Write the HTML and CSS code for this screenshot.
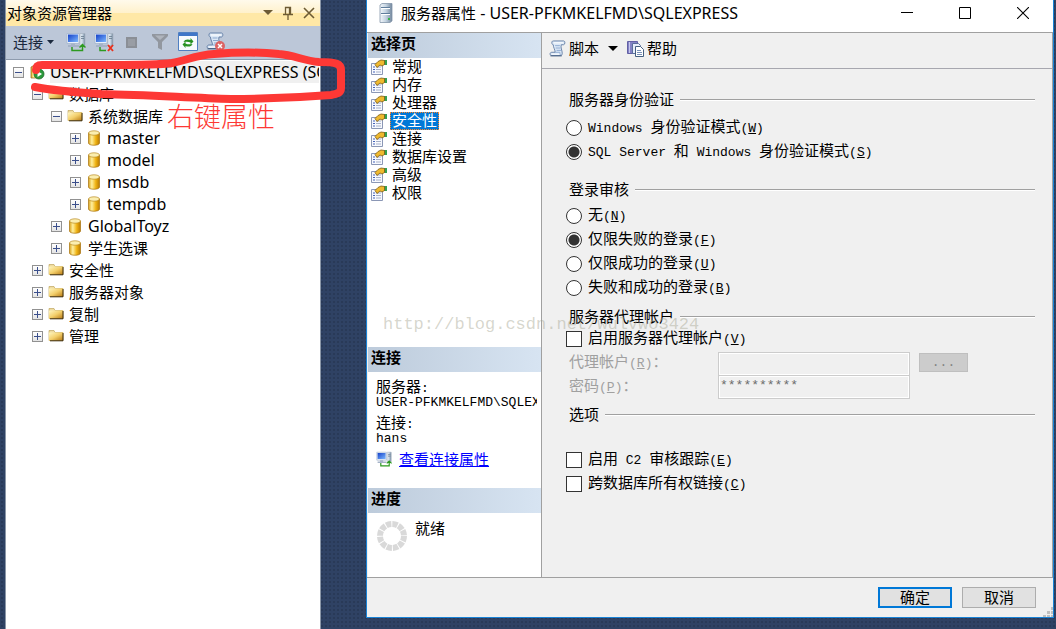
FILE: index.html
```
<!DOCTYPE html>
<html lang="zh-CN">

<head>
    <meta charset="UTF-8">
    <meta name="viewport" content="width=device-width, initial-scale=1.0">
    <title>服务器属性</title>
    <link rel="stylesheet" href="styles.css">
</head>

<body>
    <!-- shared icons -->
    <svg class="sprite" aria-hidden="true">
        <defs>
            <linearGradient id="gold" x1="0" x2="1">
                <stop offset="0" stop-color="#d9a21c"/>
                <stop offset=".3" stop-color="#fff0a0"/>
                <stop offset=".65" stop-color="#f0b416"/>
                <stop offset="1" stop-color="#b97a00"/>
            </linearGradient>
            <linearGradient id="folderFill" x1="0" y1="0" x2="1" y2="1">
                <stop offset="0" stop-color="#fff6c0"/>
                <stop offset=".5" stop-color="#f3cf6b"/>
                <stop offset="1" stop-color="#b87a14"/>
            </linearGradient>
            <linearGradient id="screen" x1="0" y1="0" x2="1" y2="1">
                <stop offset="0" stop-color="#1440c8"/>
                <stop offset="1" stop-color="#7db8ff"/>
            </linearGradient>
            <linearGradient id="steel" x1="0" x2="1">
                <stop offset="0" stop-color="#f4f8fb"/>
                <stop offset=".5" stop-color="#c3d2e0"/>
                <stop offset="1" stop-color="#71869c"/>
            </linearGradient>
        </defs>
        <symbol id="folder" viewBox="0 0 16 16">
            <path d="M1 2.500h5l1 2h8v8H1z" fill="#efdca0" stroke="#b79a4d" stroke-width=".6"/>
            <path d="M1 4.500h14v8H1z" fill="url(#folderFill)"/>
            <path d="M2 12.800h13V5" fill="none" stroke="#3b2a0a"/>
        </symbol>
        <symbol id="database" viewBox="0 0 16 16">
            <path d="M2.500 3v10c0 3 11 3 11 0V3z" fill="url(#gold)" stroke="#a87310" stroke-width=".7"/>
            <ellipse cx="8" cy="3" rx="5.500" ry="2.200" fill="#fbeeb0" stroke="#b98b22" stroke-width=".7"/>
        </symbol>
        <symbol id="server" viewBox="0 0 16 16">
            <path d="M2 3l4-2 4 2v11H2z" fill="url(#gold)" stroke="#8c6a1c" stroke-width=".7"/>
            <circle cx="10" cy="10" r="5" fill="#2c9a3c" stroke="#1a6a28" stroke-width=".8"/>
            <path d="M8.500 7l4.500 3-4.500 3z" fill="#fff"/>
        </symbol>
        <symbol id="computers" viewBox="0 0 20 20">
            <path d="M14 1.500h5v12h-5z" fill="url(#steel)" stroke="#a5b0be" stroke-width=".7"/>
            <path d="M15 4.500h3M15 6.500h3" stroke="#66788c" stroke-width=".8"/>
            <path d="M1 1.500h12v10H1z" fill="#e8f0fa" stroke="#a5b5cd" stroke-width=".8"/>
            <path d="M2 2.500h10v7.500H2z" fill="url(#screen)"/>
            <path d="M5 11.500h4V13H5zM2 13h11v2H2z" fill="#a5b3c8"/>
        </symbol>
        <symbol id="connect" viewBox="0 0 20 20">
            <use href="#computers"/>
            <path d="M6 15v3.500h10.500V13M13.500 15.500l3-3 3 3" fill="none" stroke="#2d9a1f" stroke-width="1.500"/>
        </symbol>
        <symbol id="disconnect" viewBox="0 0 20 20">
            <use href="#computers"/>
            <path d="M6 15v3.500h6" fill="none" stroke="#2d9a1f" stroke-width="1.500"/>
            <path d="M14 13l5 6M19 13l-5 6" stroke="#e8311c" stroke-width="1.900"/>
        </symbol>
        <symbol id="scroll" viewBox="0 0 18 18">
            <path d="M3 3C3 1 4 1 5 1h10.500C17.500 1 17 5 15.500 5H13c-1 3 1 6 1 9 0 1.500-.5 2.500-2 2.500H3c-2.500 0-2.500-3.500 0-3.500h3.500c0-3-2-5-2-8C3.500 5 3 4 3 3z" fill="#dce8f6" stroke="#6681a8"/>
            <path d="M6.500 13h5c0 2 .3 3 1.500 3M6.500 6h5M7 8.500h5M8 11h5" fill="none" stroke="#8ba8cf"/>
            <path d="M5 3h10M3 15h8" stroke="#fff"/>
            <path d="M1.500 16.800h12" stroke="#40597c"/>
        </symbol>
        <symbol id="page" viewBox="0 0 16 16">
            <path d="M.5 4.500h11v11H.5z" fill="#f7f9fe" stroke="#8b97b5"/>
            <path d="M2 8h2M2 10.500h2M2 13h2" stroke="#4463b8" stroke-width="1.200"/>
            <path d="M5 8h5M5 10.500h5M5 13h5" stroke="#a6b0c8"/>
            <path d="M13 1h3v5h-3z" fill="#35a052"/>
            <path d="M4 5.500L7 2.500l3-1.500 3.500.5v4L11 7 9 6 6 8.500z" fill="#efb92e" stroke="#7c5a14" stroke-width=".8"/>
        </symbol>
    </svg>

    <div class="desktop">
        <aside class="explorer">
            <header class="explorer-title">
                <h1>对象资源管理器</h1>
                <button aria-label="窗口位置"><svg width="10" height="6"><path d="M0 0h10L5 5z" fill="#6d5b35"/></svg></button>
                <button aria-label="自动隐藏"><svg width="12" height="14"><path d="M3.500 8V1.500h5V8M1 8.500h10M6 9v5M7.500 1v7" fill="none" stroke="#6d5b35" stroke-width="1.300"/></svg></button>
                <button aria-label="关闭"><svg width="12" height="12"><path d="M1 1l10 10M11 1L1 11" stroke="#6d5b35" stroke-width="1.600"/></svg></button>
            </header>
            <div class="explorer-tools">
                <button class="connect-menu">连接<svg width="7" height="4"><path d="M0 0h7L3.500 4z" fill="#1b293e"/></svg></button>
                <button aria-label="连接服务器"><svg width="20" height="20"><use href="#connect"/></svg></button>
                <button aria-label="断开连接"><svg width="20" height="20"><use href="#disconnect"/></svg></button>
                <button aria-label="停止"><svg width="20" height="20"><path d="M4 5h11v11H4z" fill="#8b8f96"/><path d="M6 7h7v7H6z" fill="#999da4"/></svg></button>
                <button aria-label="筛选"><svg width="20" height="20"><path d="M2 2h16v2l-6 6v8l-4-2v-6L2 4z" fill="#92979f"/><path d="M5 3.500h10L10 8z" fill="#b0b5bd"/></svg></button>
                <button aria-label="刷新"><svg width="20" height="20"><path d="M.5.5h19v18H.5z" fill="#f7fafd" stroke="#4f7fc2"/><path d="M1 1h18v3H1z" fill="#3f76c8"/><path d="M5.500 10c1-3 5-3 7-2V6l3 3.500-3 3v-2c-2-1-4-1-7-.5zM14.500 12c-1 3-5 3-7 2v2l-3-3.500 3-3v2c2 1 4 1 7 .5z" fill="#279122"/></svg></button>
                <button aria-label="停止脚本"><svg width="20" height="20"><use href="#scroll" width="18" height="18"/><circle cx="14" cy="14" r="5" fill="#dc6464"/><path d="M12 12l4 4M16 12l-4 4" stroke="#fff" stroke-width="1.500"/></svg></button>
            </div>
            <ul class="tree">
                <li class="level-0 current"><button class="toggle open" aria-label="折叠"></button><svg width="16" height="16"><use href="#server"/></svg><span class="latin">USER-PFKMKELFMD\SQLEXPRESS (SQL Server)</span></li>
                <li class="level-1"><button class="toggle open" aria-label="折叠"></button><svg width="16" height="16"><use href="#folder"/></svg><span>数据库</span></li>
                <li class="level-2"><button class="toggle open" aria-label="折叠"></button><svg width="16" height="16"><use href="#folder"/></svg><span>系统数据库</span></li>
                <li class="level-3"><button class="toggle" aria-label="展开"></button><svg width="16" height="16"><use href="#database"/></svg><span class="latin">master</span></li>
                <li class="level-3"><button class="toggle" aria-label="展开"></button><svg width="16" height="16"><use href="#database"/></svg><span class="latin">model</span></li>
                <li class="level-3"><button class="toggle" aria-label="展开"></button><svg width="16" height="16"><use href="#database"/></svg><span class="latin">msdb</span></li>
                <li class="level-3"><button class="toggle" aria-label="展开"></button><svg width="16" height="16"><use href="#database"/></svg><span class="latin">tempdb</span></li>
                <li class="level-2"><button class="toggle" aria-label="展开"></button><svg width="16" height="16"><use href="#database"/></svg><span class="latin">GlobalToyz</span></li>
                <li class="level-2"><button class="toggle" aria-label="展开"></button><svg width="16" height="16"><use href="#database"/></svg><span>学生选课</span></li>
                <li class="level-1"><button class="toggle" aria-label="展开"></button><svg width="16" height="16"><use href="#folder"/></svg><span>安全性</span></li>
                <li class="level-1"><button class="toggle" aria-label="展开"></button><svg width="16" height="16"><use href="#folder"/></svg><span>服务器对象</span></li>
                <li class="level-1"><button class="toggle" aria-label="展开"></button><svg width="16" height="16"><use href="#folder"/></svg><span>复制</span></li>
                <li class="level-1"><button class="toggle" aria-label="展开"></button><svg width="16" height="16"><use href="#folder"/></svg><span>管理</span></li>
            </ul>
        </aside>

        <main class="dialog">
            <header class="dialog-title">
                <svg width="14" height="20"><path d="M1 2l2-1.500h10V18l-2 1.500H1z" fill="url(#steel)" stroke="#8496a9" stroke-width=".8"/><path d="M2 4.500h9M2 10.500h9" stroke="#5f7d9c"/><path d="M2 5.500h9M2 11.500h9" stroke="#fff"/><path d="M9 15h2v2H9z" fill="#39b54a"/></svg>
                <h2>服务器属性<span class="latin"> - USER-PFKMKELFMD\SQLEXPRESS</span></h2>
                <div class="window-buttons">
                    <button aria-label="最小化"><svg width="12" height="12"><path d="M0 5.500h12" stroke="#000"/></svg></button>
                    <button aria-label="最大化"><svg width="12" height="12"><path d="M.5.5h11v11H.5z" fill="none" stroke="#000"/></svg></button>
                    <button aria-label="关闭"><svg width="12" height="12"><path d="M0 0l12 12M12 0L0 12" stroke="#000" stroke-width="1.100"/></svg></button>
                </div>
            </header>

            <div class="dialog-body">
                <nav class="side">
                    <h3>选择页</h3>
                    <ul class="pages">
                        <li><svg width="16" height="16"><use href="#page"/></svg><button>常规</button></li>
                        <li><svg width="16" height="16"><use href="#page"/></svg><button>内存</button></li>
                        <li><svg width="16" height="16"><use href="#page"/></svg><button>处理器</button></li>
                        <li><svg width="16" height="16"><use href="#page"/></svg><button class="selected">安全性</button></li>
                        <li><svg width="16" height="16"><use href="#page"/></svg><button>连接</button></li>
                        <li><svg width="16" height="16"><use href="#page"/></svg><button>数据库设置</button></li>
                        <li><svg width="16" height="16"><use href="#page"/></svg><button>高级</button></li>
                        <li><svg width="16" height="16"><use href="#page"/></svg><button>权限</button></li>
                    </ul>
                    <h3>连接</h3>
                    <div class="connection">
                        <p>服务器<span class="en">:</span></p>
                        <p class="en">USER-PFKMKELFMD\SQLEXPRESS</p>
                        <p class="next">连接<span class="en">:</span></p>
                        <p class="en">hans</p>
                        <div class="view-link"><svg width="16" height="16"><use href="#connect"/></svg><a href="#">查看连接属性</a></div>
                    </div>
                    <h3>进度</h3>
                    <div class="progress">
                        <svg width="32" height="32"><circle cx="16" cy="16" r="12" fill="none" stroke="#d9d9d9" stroke-width="6" stroke-dasharray="5.280 1"/></svg>
                        <span>就绪</span>
                    </div>
                </nav>

                <section class="content">
                    <div class="content-tools">
                        <button><svg width="17" height="17"><use href="#scroll"/></svg>脚本</button>
                        <button class="script-menu" aria-label="脚本选项"><svg width="10" height="5"><path d="M0 0h10L5 5z"/></svg></button>
                        <button><svg width="17" height="17"><path d="M.5 1.500h10v12H.5z" fill="#8382c4" stroke="#6260a5"/><path d="M2.500 2v11" stroke="#c6c6ee"/><path d="M5.500 3.500h6l2 2v8h-8z" fill="#e8eefb" stroke="#5b6f9c"/><path d="M8.500 6.500h5l3 3v7h-8z" fill="#fff" stroke="#445f80"/><path d="M10 10.500h4M10 12.500h5M10 14.500h5" stroke="#7891b8"/></svg>帮助</button>
                    </div>

                    <form class="settings">
                        <h4>服务器身份验证</h4>
                        <div class="options auth">
                            <label><input type="radio" name="auth"><span><span class="en">Windows </span>身份验证模式<span class="en">(<u>W</u>)</span></span></label>
                            <label><input type="radio" name="auth" checked><span><span class="en">SQL Server </span>和<span class="en"> Windows </span>身份验证模式<span class="en">(<u>S</u>)</span></span></label>
                        </div>

                        <h4>登录审核</h4>
                        <div class="options audit">
                            <label><input type="radio" name="audit"><span>无<span class="en">(<u>N</u>)</span></span></label>
                            <label><input type="radio" name="audit" checked><span>仅限失败的登录<span class="en">(<u>F</u>)</span></span></label>
                            <label><input type="radio" name="audit"><span>仅限成功的登录<span class="en">(<u>U</u>)</span></span></label>
                            <label><input type="radio" name="audit"><span>失败和成功的登录<span class="en">(<u>B</u>)</span></span></label>
                        </div>

                        <h4>服务器代理帐户</h4>
                        <div class="options proxy">
                            <label><input type="checkbox"><span>启用服务器代理帐户<span class="en">(<u>V</u>)</span></span></label>
                            <div class="fields">
                                <label for="account">代理帐户<span class="en">(<u>R</u>)</span>：</label>
                                <input type="text" id="account" disabled>
                                <button type="button" disabled>...</button>
                                <label for="password">密码<span class="en">(<u>P</u>)</span>：</label>
                                <input type="text" id="password" value="**********" disabled>
                            </div>
                        </div>

                        <h4>选项</h4>
                        <div class="options other">
                            <label><input type="checkbox"><span>启用<span class="en"> C2 </span>审核跟踪<span class="en">(<u>E</u>)</span></span></label>
                            <label><input type="checkbox"><span>跨数据库所有权链接<span class="en">(<u>C</u>)</span></span></label>
                        </div>
                    </form>
                </section>
            </div>

            <footer class="dialog-footer">
                <button class="primary">确定</button>
                <button>取消</button>
                <svg class="grip" width="10" height="10"><path d="M8 0h3v3H8zM4 4h3v3H4zM8 4h3v3H8zM0 8h3v3H0zM4 8h3v3H4zM8 8h3v3H8z" fill="#bfbfbf"/></svg>
            </footer>
            <span class="watermark">http://blog.csdn.net/wulvwo3424</span>
        </main>
    </div>

    <!-- red pen marks -->
    <svg class="scribble" width="350" height="105" aria-hidden="true">
        <path d="M36 70c0-4 2-5 6-5h70c25 0 45 0 60-2 15-3 25-8 42-9 25-2 45-2 65 0 15 1 25 7 40 8 18 0 22 2 22 8v18c0 5-4 6-10 7-25 2-60 4-100 4-40-1-80-4-130-5-30-2-45-3-66-7" fill="none" stroke="#fd3835" stroke-width="8" stroke-linecap="round" stroke-linejoin="round"/>
    </svg>
    <span class="note">右键属性</span>
</body>

</html>
```
FILE: styles.css
```
* {
    box-sizing: border-box;
}

body {
    margin: 0;
    font-family: "Noto Sans", "Noto Sans CJK SC", sans-serif;
    font-size: 15px;
    line-height: 18px;
    color: #000;
    background-color: #2f4264;
    background-image: radial-gradient(#293a58 1px, transparent 1px);
    background-size: 4px 4px;
}

h1,
h2,
h3,
h4,
p,
ul {
    margin: 0;
    padding: 0;
    font-size: 15px;
    font-weight: normal;
    list-style: none;
}

button,
input {
    font: inherit;
    color: inherit;
}

button {
    display: flex;
    align-items: center;
    padding: 0;
    border: none;
    background: none;
}

svg {
    display: block;
    flex: none;
}

.sprite {
    position: absolute;
    width: 0;
    height: 0;
}

.latin {
    font-size: 16px;
}

.en {
    font-family: "Liberation Mono", monospace;
    font-size: 13px;
    white-space: pre;
}

.desktop {
    display: flex;
    gap: 45px;
    min-height: 100vh;
    padding: 0 2px 0 5px;
}

/* object explorer */
.explorer {
    flex: 0 0 316px;
    min-width: 0;
    background: #fff;
    border: 1px solid #8b97a8;
    border-width: 0 1px;
}

.explorer-title {
    display: flex;
    align-items: center;
    gap: 9px;
    height: 26px;
    padding: 0 5px 0 1px;
    background: linear-gradient(#fffaec, #fff1cb 50%, #ffe8a6 50%, #ffe8a6);
}

.explorer-title h1 {
    flex: 1;
}

.explorer-tools {
    display: flex;
    align-items: center;
    gap: 8px;
    height: 34px;
    padding: 0 7px 2px;
    background: #bcc7d8;
    border-bottom: 1px solid #8e9bad;
}

.connect-menu {
    gap: 4px;
    margin-right: 4px;
    color: #1b293e;
}

.tree {
    padding-top: 1px;
}

.tree li {
    display: flex;
    align-items: center;
    height: 22px;
    padding-right: 1px;
    overflow: hidden;
    white-space: nowrap;
}

.tree li svg {
    margin: 0 5px;
}

.tree .level-0 {
    padding-left: 7px;
}

.tree .level-1 {
    padding-left: 26px;
}

.tree .level-2 {
    padding-left: 45px;
}

.tree .level-3 {
    padding-left: 64px;
}

.current span {
    min-width: 0;
    overflow: hidden;
    line-height: 22px;
    background: #f0f0f0;
}

.toggle {
    flex: none;
    width: 11px;
    height: 11px;
    border: 1px solid #919191;
    background:
        linear-gradient(#3b4f8c, #3b4f8c) center / 7px 1px no-repeat,
        linear-gradient(#3b4f8c, #3b4f8c) center / 1px 7px no-repeat,
        linear-gradient(#fff, #e4e4e4);
}

.toggle.open {
    background:
        linear-gradient(#3b4f8c, #3b4f8c) center / 7px 1px no-repeat,
        linear-gradient(#fff, #e4e4e4);
}

/* properties dialog */
.dialog {
    position: relative;
    flex: 1;
    min-width: 0;
    display: flex;
    flex-direction: column;
    margin-bottom: 11px;
    background: #f0f0f0;
    border: 1px solid #1883d7;
    border-top: none;
    font-family: "Liberation Sans", "Noto Sans CJK SC", sans-serif;
}

.dialog-title {
    display: flex;
    align-items: center;
    gap: 8px;
    height: 33px;
    padding: 0 24px 6px 12px;
    background: #fff;
    border-bottom: 1px solid #a0a0a0;
    font-family: "Noto Sans", "Noto Sans CJK SC", sans-serif;
}

.dialog-title h2 {
    flex: 1;
    white-space: nowrap;
}

.window-buttons {
    display: flex;
    gap: 46px;
}

.dialog-body {
    flex: 1;
    display: flex;
    border-bottom: 1px solid #a0a0a0;
}

.side {
    flex: 0 0 175px;
    min-width: 0;
    display: flex;
    flex-direction: column;
    background: #fff;
    border-right: 1px solid #a0a0a0;
    border-left: 1px solid #f0f0f0;
}

.side h3 {
    height: 25px;
    padding: 0 3px;
    line-height: 22px;
    font-weight: bold;
    background: linear-gradient(to right, #bdcbdb, #d7e4f2);
}

.pages {
    flex: 1;
}

.pages li {
    display: flex;
    align-items: center;
    gap: 3px;
    height: 18px;
    padding-left: 3px;
}

.pages button {
    height: 18px;
    padding: 0 1px;
    border: 1px solid transparent;
    white-space: nowrap;
}

.pages .selected {
    color: #fff;
    background: #0078d7;
    border: 1px dotted #ff8728;
}

.connection {
    height: 116px;
    padding: 7px 4px 0 8px;
}

.connection p {
    height: 16px;
    overflow: hidden;
    line-height: 16px;
}

.connection .next {
    margin-top: 4px;
}

.view-link {
    display: flex;
    gap: 7px;
    margin-top: 4px;
}

.view-link a {
    color: #00f;
}

.progress {
    display: flex;
    gap: 7px;
    height: 64px;
    padding: 7px 8px;
}

.content {
    flex: 1;
    min-width: 0;
    border-right: 1px solid #a0a0a0;
}

.content-tools {
    display: flex;
    align-items: center;
    gap: 9px;
    height: 36px;
    padding: 0 7px 4px;
    border-bottom: 1px solid #a7a7af;
}

.content-tools button {
    gap: 3px;
}

.settings {
    padding: 21px 17px 0 24px;
}

.settings h4 {
    display: flex;
    align-items: center;
    gap: 6px;
    height: 20px;
    padding-left: 3px;
}

.settings h4::after {
    content: "";
    flex: 1;
    border-top: 1px solid #a0a0a0;
    border-bottom: 1px solid #fff;
}

.options > label {
    display: flex;
    align-items: center;
    gap: 6px;
    height: 24px;
}

.auth {
    padding: 6px 0 16px;
}

.audit {
    padding: 4px 0 7px;
}

.proxy {
    padding-bottom: 6px;
}

.other {
    padding-top: 23px;
}

input[type="radio"],
input[type="checkbox"] {
    appearance: none;
    width: 16px;
    height: 16px;
    margin: 0;
    border: 1px solid #333;
    background: #fff;
}

input[type="radio"] {
    border-radius: 50%;
}

input[type="radio"]:checked {
    background: radial-gradient(circle, #333 5px, #fff 6px);
}

.fields {
    display: grid;
    grid-template-columns: 149px 192px 58px;
    grid-template-rows: 24px 23px;
    padding: 1px 0 0 3px;
    color: #a0a0a0;
}

.fields label {
    line-height: 20px;
}

.fields input {
    width: 192px;
    height: 24px;
    padding: 0 1px 4px;
    border: 1px solid #ccc;
    box-shadow: inset 0 0 0 1px #fff;
    background: #f0f0f0;
    color: #6d6d6d;
    font-family: "Liberation Mono", monospace;
    font-size: 13px;
}

.fields input:last-child {
    height: 23px;
    border-top: none;
}

.fields button {
    justify-content: center;
    width: 49px;
    height: 19px;
    margin: 1px 0 0 9px;
    border: 1px solid #bfbfbf;
    background: #ccc;
    color: #838383;
    font-family: "Liberation Mono", monospace;
    font-size: 13px;
}

.dialog-footer {
    display: flex;
    justify-content: flex-end;
    gap: 10px;
    height: 39px;
    padding: 9px 17px 0;
}

.dialog-footer button {
    justify-content: center;
    width: 74px;
    height: 21px;
    background: #e1e1e1;
    border: 1px solid #adadad;
}

.dialog-footer .primary {
    border: 2px solid #0078d7;
}

.grip {
    position: absolute;
    right: 0;
    bottom: 0;
}

.watermark {
    position: absolute;
    left: 16px;
    top: 314px;
    color: rgba(165, 165, 145, 0.45);
    font-family: "Liberation Mono", monospace;
    font-size: 17px;
    line-height: 22px;
    pointer-events: none;
}

.scribble {
    position: absolute;
    top: 0;
    left: 0;
    pointer-events: none;
}

.note {
    position: absolute;
    left: 167px;
    top: 99px;
    color: #fd3835;
    font-family: "Noto Sans CJK SC", sans-serif;
    font-size: 27px;
    font-weight: 300;
    line-height: 34px;
}
```
